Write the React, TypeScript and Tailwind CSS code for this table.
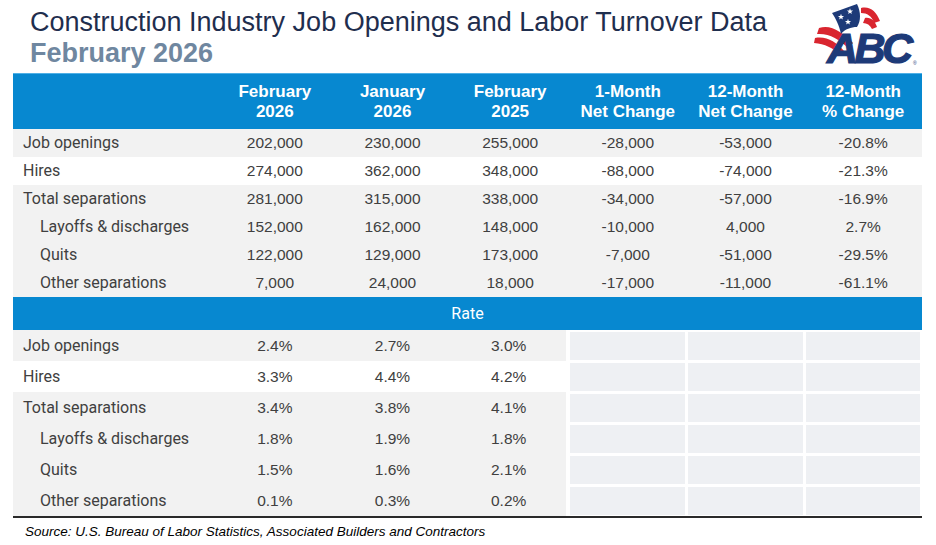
import React from "react"

const num = "font-['Liberation_Sans',Arial,sans-serif]"
const lbl = "font-['Roboto','Noto_Sans',sans-serif]"

const rows = [
  { label: "Job openings", indent: false, gray: true, v: ["202,000", "230,000", "255,000", "-28,000", "-53,000", "-20.8%"] },
  { label: "Hires", indent: false, gray: false, v: ["274,000", "362,000", "348,000", "-88,000", "-74,000", "-21.3%"] },
  { label: "Total separations", indent: false, gray: true, v: ["281,000", "315,000", "338,000", "-34,000", "-57,000", "-16.9%"] },
  { label: "Layoffs & discharges", indent: true, gray: true, v: ["152,000", "162,000", "148,000", "-10,000", "4,000", "2.7%"] },
  { label: "Quits", indent: true, gray: true, v: ["122,000", "129,000", "173,000", "-7,000", "-51,000", "-29.5%"] },
  { label: "Other separations", indent: true, gray: true, v: ["7,000", "24,000", "18,000", "-17,000", "-11,000", "-61.1%"] },
]

const rates = [
  { label: "Job openings", indent: false, gray: true, v: ["2.4%", "2.7%", "3.0%"] },
  { label: "Hires", indent: false, gray: false, v: ["3.3%", "4.4%", "4.2%"] },
  { label: "Total separations", indent: false, gray: true, v: ["3.4%", "3.8%", "4.1%"] },
  { label: "Layoffs & discharges", indent: true, gray: true, v: ["1.8%", "1.9%", "1.8%"] },
  { label: "Quits", indent: true, gray: true, v: ["1.5%", "1.6%", "2.1%"] },
  { label: "Other separations", indent: true, gray: true, v: ["0.1%", "0.3%", "0.2%"] },
]

const heads = [
  ["February", "2026"],
  ["January", "2026"],
  ["February", "2025"],
  ["1-Month", "Net Change"],
  ["12-Month", "Net Change"],
  ["12-Month", "% Change"],
]

function Star({ x, y, r }: { x: number; y: number; r: number }) {
  const pts: string[] = []
  for (let i = 0; i < 10; i++) {
    const a = -Math.PI / 2 + (i * Math.PI) / 5
    const rr = i % 2 === 0 ? r : r * 0.42
    pts.push(`${(x + rr * Math.cos(a)).toFixed(2)},${(y + rr * Math.sin(a)).toFixed(2)}`)
  }
  return <polygon points={pts.join(" ")} fill="#fff" />
}

function Logo() {
  return (
    <svg width="120" height="66" viewBox="0 0 120 66" overflow="visible">
      {/* stripes */}
      <path d="M8 25 C20 21 31 29 42 40 L37 45 C28 36 18 30 6 31 Z" fill="#d9252f" />
      <path d="M4 35 C16 33 25 39 33 48 L29 51 C22 45 14 41 3 40 Z" fill="#d9252f" />
      <path d="M50 5 C59 3 65 8 69 18 L63 20 C61 13 56 10 50 10 Z" fill="#d9252f" />
      <path d="M54 15 C60 14 64 18 66 24 L61 26 C59 22 56 20 52 20 Z" fill="#d9252f" />
      {/* canton */}
      <path d="M21 10 L46 1 C50 9 50 18 46 24 C40 24 34 26 30 31 C28 22 25 16 21 10 Z" fill="#1d3a78" />
      <Star x={30} y={14} r={3.2} />
      <Star x={39} y={8.5} r={3.2} />
      <Star x={37} y={19} r={3.2} />
      <text
        x="16"
        y="60"
        fill="#1d3a78"
        stroke="#1d3a78"
        strokeWidth="1.2"
        fontFamily="Liberation Sans, Arial, sans-serif"
        fontWeight="900"
        fontStyle="italic"
        fontSize="43"
        letterSpacing="-3.5"
      >
        ABC
      </text>
      <text x="102" y="62" fill="#1d3a78" fontFamily="Liberation Sans, Arial, sans-serif" fontSize="5">
        ®
      </text>
    </svg>
  )
}

export default function App() {
  return (
    <div className="relative w-[936px] h-[545px] bg-white overflow-hidden">
      <div className="absolute left-[811px] top-[3px]">
        <Logo />
      </div>

      <div className={`pl-[30px] pt-[7px] ${num}`}>
        <div className="text-[27px] leading-[30px] text-[#1f2e4e]">
          Construction Industry Job Openings and Labor Turnover Data
        </div>
        <div className="mt-[1px] text-[27px] leading-[31px] font-bold text-[#6f87a0]">February 2026</div>
      </div>

      <div className="ml-[13px] mt-[4px] w-[909px]">
        {/* header */}
        <div className="grid grid-cols-[203px_repeat(6,1fr)] h-[56px] bg-[#0788d0] border-t border-[#4fb0e6]">
          <div />
          {heads.map((h, i) => (
            <div
              key={i}
              className={`flex flex-col items-center justify-center text-white font-bold text-[17px] leading-[20px] ${num}`}
            >
              <span>{h[0]}</span>
              <span>{h[1]}</span>
            </div>
          ))}
        </div>

        {/* levels */}
        {rows.map((r) => (
          <div
            key={r.label}
            className={`grid grid-cols-[203px_repeat(6,1fr)] h-[28px] items-center ${r.gray ? "bg-[#f2f2f2]" : "bg-white"}`}
          >
            <div className={`${r.indent ? "pl-[27px]" : "pl-[10px]"} text-[16px] text-[#404040] ${lbl}`}>{r.label}</div>
            {r.v.map((v, i) => (
              <div key={i} className={`text-center text-[15.5px] text-[#404040] ${num}`}>
                {v}
              </div>
            ))}
          </div>
        ))}

        {/* rate header */}
        <div className={`h-[33px] bg-[#0788d0] flex items-center justify-center text-white text-[16px] ${lbl}`}>Rate</div>

        {/* rates */}
        {rates.map((r) => (
          <div key={r.label} className="grid grid-cols-[203px_repeat(6,1fr)] h-[31px] bg-white">
            <div
              className={`flex items-center ${r.indent ? "pl-[27px]" : "pl-[10px]"} text-[16px] text-[#404040] ${lbl} ${
                r.gray ? "bg-[#f2f2f2]" : ""
              }`}
            >
              {r.label}
            </div>
            {r.v.map((v, i) => (
              <div
                key={i}
                className={`flex items-center justify-center text-[15.5px] text-[#404040] ${num} ${
                  r.gray ? "bg-[#f2f2f2]" : ""
                } ${i === 2 ? "mr-[3px]" : ""}`}
              >
                {v}
              </div>
            ))}
            {[0, 1, 2].map((i) => (
              <div key={i} className="m-[1.5px] bg-[#eef0f3]" />
            ))}
          </div>
        ))}
        <div className="h-[2px] bg-[#2a2a2a]" />
      </div>

      <div className={`pl-[25px] mt-[5px] text-[13.5px] leading-[17px] italic text-black ${num}`}>
        Source: U.S. Bureau of Labor Statistics, Associated Builders and Contractors
      </div>
    </div>
  )
}
